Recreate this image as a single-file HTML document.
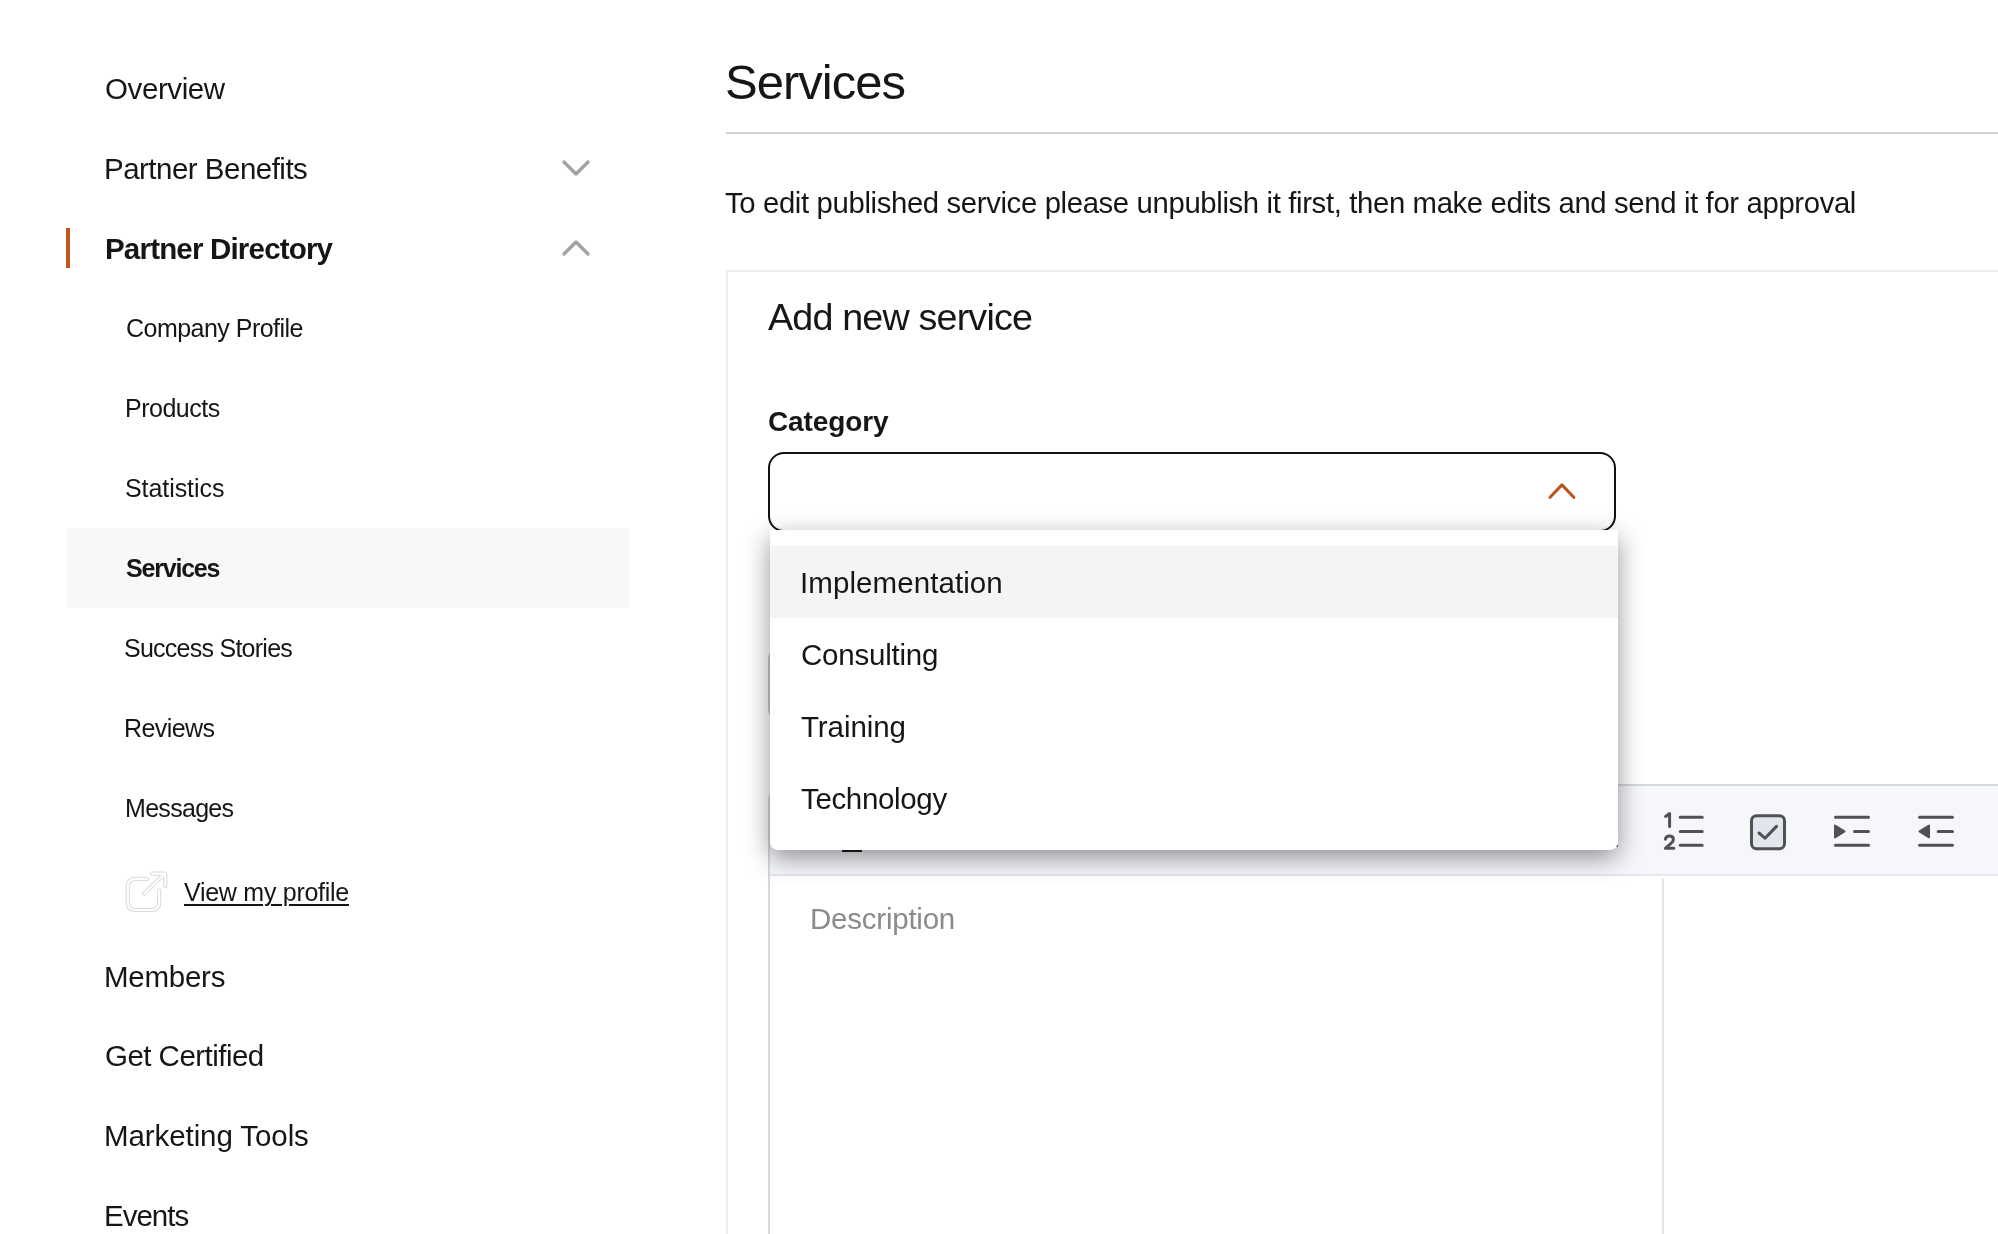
<!DOCTYPE html>
<html><head><meta charset="utf-8">
<style>
*{box-sizing:border-box;margin:0;padding:0}
html,body{width:1998px;height:1234px;overflow:hidden;background:#fff}
body{font-family:"Liberation Sans",sans-serif;color:#161616;position:relative}
.t{position:absolute;white-space:nowrap;line-height:1;will-change:transform}
.r{position:absolute}
.nav{font-size:29.5px;left:107px}
.sub{font-size:25px;left:127px}
.b{font-weight:bold}
.dd .t{font-size:29.5px;left:33px}
</style><style id="fit">
#t1{letter-spacing:-0.4px;margin-left:-2.3px;margin-top:-0.1px}
#t2{letter-spacing:-0.513px;margin-left:-3.3px;margin-top:-0.5px}
#t3{letter-spacing:-0.812px;margin-left:-2.3px;margin-top:-0.2px}
#t4{letter-spacing:-0.521px;margin-left:-1.3px;margin-top:0px}
#t5{letter-spacing:-0.5px;margin-left:-2px;margin-top:0.2px}
#t6{letter-spacing:-0.067px;margin-left:-2.3px;margin-top:0.1px}
#t7{letter-spacing:-1.2px;margin-left:-1.4px;margin-top:0px}
#t8{letter-spacing:-0.743px;margin-left:-2.6px;margin-top:0px}
#t9{letter-spacing:-0.567px;margin-left:-2.6px;margin-top:0px}
#t10{letter-spacing:-0.7px;margin-left:-2.3px;margin-top:0px}
#t11{letter-spacing:-0.271px;margin-left:0.2px;margin-top:0px}
#t12{letter-spacing:-0.25px;margin-left:-2.8px;margin-top:0.2px}
#t13{letter-spacing:-0.533px;margin-left:-1.8px;margin-top:-0.7px}
#t14{letter-spacing:-0.086px;margin-left:-2.8px;margin-top:-0.9px}
#t15{letter-spacing:-1.0px;margin-left:-2.8px;margin-top:-1px}
#m1{letter-spacing:-0.971px;margin-left:-2.4px;margin-top:0.2px}
#m2{letter-spacing:-0.359px;margin-left:-0.8px;margin-top:0.2px}
#m3{letter-spacing:-0.829px;margin-left:-0.1px;margin-top:1px}
#m4{letter-spacing:-0.114px;margin-left:-0.2px;margin-top:0.7px}
#m5{letter-spacing:-0.23px;margin-left:-1.4px;margin-top:-0.2px}
#d1{letter-spacing:0.077px;margin-left:-2.6px;margin-top:-0.6px}
#d2{letter-spacing:-0.222px;margin-left:-1.6px;margin-top:-0.7px}
#d3{letter-spacing:-0.071px;margin-left:-2.1px;margin-top:-1.3px}
#d4{letter-spacing:-0.344px;margin-left:-2.1px;margin-top:-0.9px}
</style></head><body>
<!-- sidebar -->
<div class="r" style="left:66px;top:528px;width:564px;height:80px;background:#f7f8f8"></div>
<div class="r" style="left:66px;top:228px;width:4px;height:40px;background:#c0551e"></div>

<div id="t1" class="t nav" style="top:74px">Overview</div>
<div id="t2" class="t nav" style="top:154px">Partner Benefits</div>
<div id="t3" class="t nav b" style="top:234px">Partner Directory</div>
<div id="t4" class="t sub" style="top:316px">Company Profile</div>
<div id="t5" class="t sub" style="top:396px">Products</div>
<div id="t6" class="t sub" style="top:476px">Statistics</div>
<div id="t7" class="t sub b" style="top:556px">Services</div>
<div id="t8" class="t sub" style="top:636px">Success Stories</div>
<div id="t9" class="t sub" style="top:716px">Reviews</div>
<div id="t10" class="t sub" style="top:796px">Messages</div>
<div id="t11" class="t sub" style="top:880px;left:184px;text-decoration:underline;text-decoration-thickness:2px;text-underline-offset:3px">View my profile</div>
<div id="t12" class="t nav" style="top:962px">Members</div>
<div id="t13" class="t nav" style="top:1042px">Get Certified</div>
<div id="t14" class="t nav" style="top:1122px">Marketing Tools</div>
<div id="t15" class="t nav" style="top:1202px">Events</div>

<svg class="r" style="left:0;top:0" width="700" height="1234">
  <g fill="none" stroke="#a3a3a3" stroke-width="3.5" stroke-linecap="round" stroke-linejoin="round">
    <path d="M564 162 L576 174 L588 162"/>
    <path d="M564 254 L576 242 L588 254"/>
  </g>
  <g fill="none" stroke-linecap="round" stroke-linejoin="round">
    <path d="M147.2 878.9 H135.5 Q127.8 878.9 127.8 886.6 V902.3 Q127.8 910 135.5 910 H151.5 Q159.2 910 159.2 902.3 V890.5" stroke="#dadada" stroke-width="4.2"/>
    <path d="M147.2 878.9 H135.5 Q127.8 878.9 127.8 886.6 V902.3 Q127.8 910 135.5 910 H151.5 Q159.2 910 159.2 902.3 V890.5" stroke="#fff" stroke-width="2.2"/>
    <path d="M144.3 893.6 L164.8 873.6 M151.8 873.6 H165.3 V886" stroke="#dadada" stroke-width="4.2"/>
    <path d="M144.3 893.6 L164.8 873.6 M151.8 873.6 H165.3 V886" stroke="#fff" stroke-width="2.2"/>
  </g>
</svg>

<!-- main -->
<div id="m1" class="t" style="left:727px;top:58px;font-size:49px">Services</div>
<div class="r" style="left:726px;top:132px;width:1272px;height:2px;background:#d2d4d4"></div>
<div id="m2" class="t" style="left:726px;top:188px;font-size:29.3px">To edit published service please unpublish it first, then make edits and send it for approval</div>

<div class="r" style="left:726px;top:270px;width:1300px;height:1000px;border:2px solid #e9eef0;border-right:none;border-bottom:none"></div>
<div id="m3" class="t" style="left:768px;top:298px;font-size:37.7px">Add new service</div>
<div id="m4" class="t b" style="left:768px;top:407px;font-size:28px">Category</div>
<div class="r" style="left:768px;top:452px;width:848px;height:80px;border:2px solid #111;border-radius:16px"></div>
<svg class="r" style="left:1540px;top:474px" width="44" height="34">
  <path d="M10.1 23.3 L21.9 10.9 L33.8 23.3" fill="none" stroke="#b9531c" stroke-width="3" stroke-linecap="round" stroke-linejoin="round" transform="translate(0,0)"/>
</svg>

<!-- hidden input behind dropdown -->
<div class="r" style="left:768px;top:644px;width:848px;height:80px;border:2px solid #c8cccc;border-radius:16px"></div>

<!-- editor -->
<div class="r" style="left:768px;top:784px;width:1300px;height:600px;border:2px solid #d5d7e0;border-radius:16px 0 0 0;border-right:none;border-bottom:none"></div>
<div class="r" style="left:770px;top:786px;width:1228px;height:90px;background:#f6f7fb;border-bottom:2px solid #e5e7ee"></div>
<div class="r" style="left:842px;top:850px;width:20px;height:2px;background:#222"></div>
<div class="r" style="left:1596px;top:844px;width:22px;height:3px;border-radius:2px;background:#515151"></div>
<div class="r" style="left:1662px;top:878px;width:2px;height:400px;background:#e4e6ec"></div>
<div id="m5" class="t" style="left:811px;top:904px;font-size:29.5px;color:#8b8b8b">Description</div>

<svg class="r" style="left:1640px;top:790px" width="358" height="84">
  <g fill="none" stroke="#515151" stroke-width="3" stroke-linecap="round" stroke-linejoin="round">
    <path d="M40.2 27.2 H62.2 M40.2 41.4 H62.2 M40.2 55.3 H62.2"/>
    <rect x="111.5" y="25.7" width="33" height="33" rx="5" fill="#e3e5ee"/>
    <path d="M119 43 L125 48.2 L136.5 36.4"/>
    <path d="M195.5 27.2 H228.5 M214.5 41.4 H228.5 M195.5 55.3 H228.5"/>
    <path d="M279.5 27.2 H312.5 M298.2 41.4 H312.5 M279.5 55.3 H312.5"/>
  </g>
  <g fill="#515151" stroke="#515151" stroke-width="2" stroke-linejoin="round">
    <path d="M195 35.5 L204.5 41.4 L195 47.3 Z"/>
    <path d="M289 35.5 L279.5 41.4 L289 47.3 Z"/>
  </g>
  <g fill="none" stroke="#515151" stroke-width="3" stroke-linecap="round" stroke-linejoin="round">
    <path d="M25.6 26.4 L29.6 23.6 V36.4"/>
    <path d="M25.5 49.2 Q25.8 46 29.5 46 Q33.4 46 33.4 49.4 Q33.4 51.4 31 53.4 L25.3 58.3 H33.9"/>
  </g>
</svg>

<!-- dropdown -->
<div class="r dd" style="left:770px;top:530px;width:848px;height:320px;background:#fff;border-radius:0 0 8px 8px;box-shadow:0 8px 26px rgba(0,0,0,0.42)">
  <div class="r" style="left:0;top:16px;width:848px;height:72px;background:#f4f4f4"></div>
  <div id="d1" class="t" style="top:39px">Implementation</div>
  <div id="d2" class="t" style="top:111px">Consulting</div>
  <div id="d3" class="t" style="top:183px">Training</div>
  <div id="d4" class="t" style="top:255px">Technology</div>
</div>

</body></html>
